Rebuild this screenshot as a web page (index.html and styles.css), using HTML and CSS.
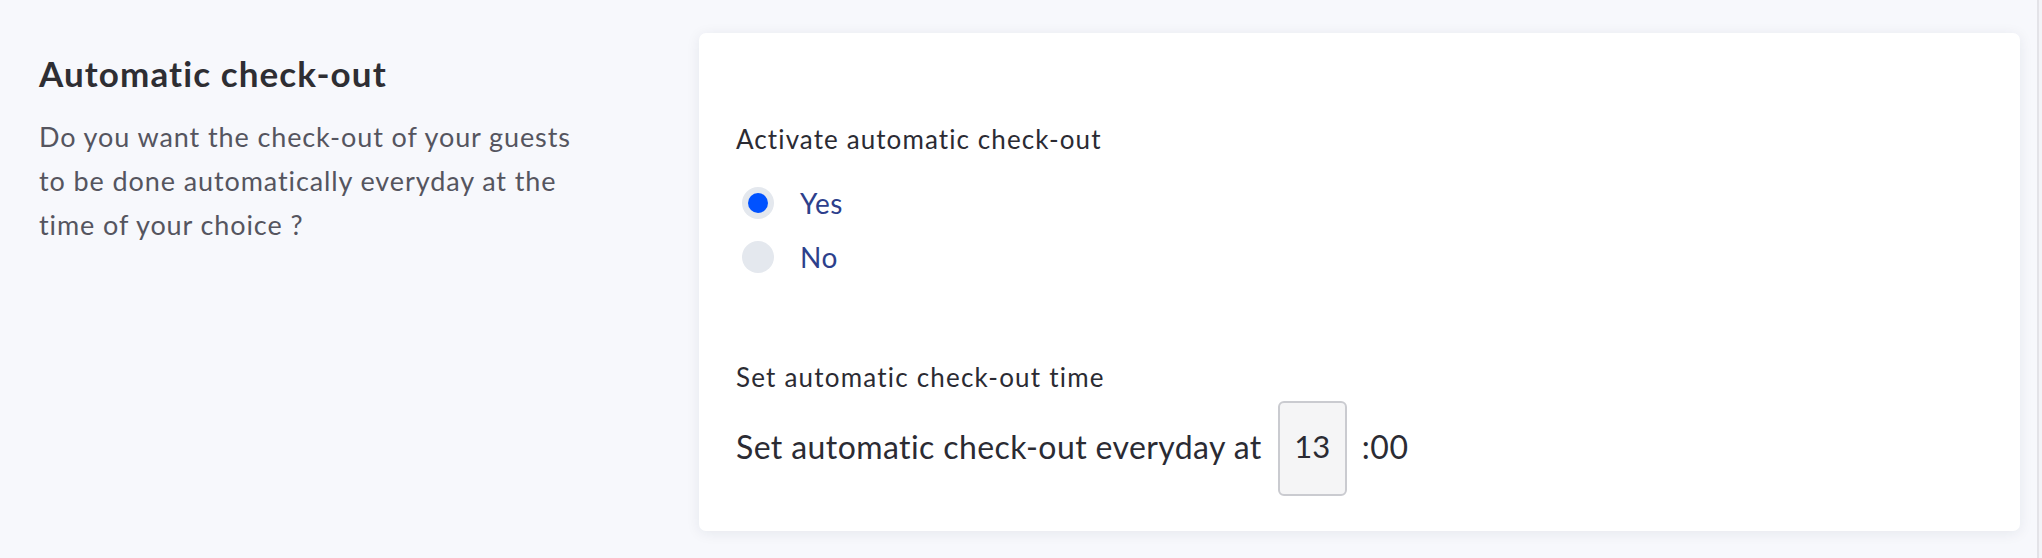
FILE: index.html
```html
<!DOCTYPE html>
<html lang="en">
<head>
<meta charset="utf-8">
<title>Automatic check-out</title>
<link rel="stylesheet" href="styles.css">
</head>
<body>
<div class="page">
  <section class="setting">
    <div class="intro">
      <h2 class="intro-title">Automatic check-out</h2>
      <p class="intro-text">Do you want the check-out of your guests to be done automatically everyday at the time of your choice ?</p>
    </div>
    <div class="card">
      <div class="field">
        <div class="field-label">Activate automatic check-out</div>
        <div class="radios">
          <label class="radio">
            <span class="radio-dot checked"></span>
            <span class="radio-text">Yes</span>
          </label>
          <label class="radio">
            <span class="radio-dot"></span>
            <span class="radio-text">No</span>
          </label>
        </div>
      </div>
      <div class="field time-field">
        <div class="field-label small">Set automatic check-out time</div>
        <div class="time-row">
          <span class="time-text">Set automatic check-out everyday at</span>
          <span class="time-box">13</span>
          <span class="time-suffix">:00</span>
        </div>
      </div>
    </div>
  </section>
  <div class="scroll-edge"></div>
</div>
</body>
</html>
```

FILE: styles.css
```css
html, body {
  margin: 0;
  padding: 0;
}

body {
  background: #f7f8fc;
  font-family: Lato, "Open Sans", sans-serif;
  color: #2b2b33;
  width: 2042px;
  height: 558px;
  overflow: hidden;
}

.page {
  display: flex;
  height: 558px;
}

.setting {
  flex: 1;
  display: flex;
  padding: 33px 0 0 39px;
}

.intro {
  width: 580px;
  flex: none;
  padding-top: 20px;
}

.intro-title {
  margin: 0;
  font-size: 35px;
  font-weight: 700;
  letter-spacing: 1.1px;
  color: #2e2e33;
  line-height: 40px;
}

.intro-text {
  margin: 22px 0 0 0;
  font-size: 27px;
  letter-spacing: 0.9px;
  line-height: 44px;
  color: #55555f;
  width: 545px;
}

.card {
  margin-left: 80px;
  width: 1321px;
  height: 498px;
  box-sizing: border-box;
  background: #fff;
  border-radius: 7px;
  box-shadow: 0 2px 14px rgba(30, 35, 70, 0.08);
  padding: 90px 37px 0 37px;
}

.field-label {
  font-size: 26px;
  line-height: 32px;
  color: #2b2b33;
  letter-spacing: 1.1px;
}

.radios {
  display: flex;
  flex-direction: column;
  gap: 22px;
  margin-top: 32px;
  padding-left: 6px;
}

.radio {
  display: flex;
  align-items: center;
  gap: 26px;
}

.radio-dot {
  width: 32px;
  height: 32px;
  border-radius: 50%;
  background: #e4e8ee;
  display: flex;
  align-items: center;
  justify-content: center;
}

.radio-dot.checked::after {
  content: "";
  width: 20px;
  height: 20px;
  border-radius: 50%;
  background: #0052ff;
}

.radio-text {
  font-size: 28px;
  color: #2d3f8c;
  line-height: 32px;
  letter-spacing: 0.5px;
}

.time-field {
  margin-top: 88px;
}

.field-label.small {
  letter-spacing: 1.2px;
}

.time-row {
  display: flex;
  align-items: center;
  margin-top: 8px;
}

.time-text {
  font-size: 32px;
  line-height: 1;
  letter-spacing: 0.4px;
  color: #2b2b33;
  padding-bottom: 4px;
}

.time-box {
  width: 69px;
  height: 95px;
  box-sizing: border-box;
  margin-left: 16px;
  padding-bottom: 6px;
  border: 2px solid #cacbd0;
  border-radius: 6px;
  background: #f5f5f6;
  display: flex;
  align-items: center;
  justify-content: center;
  font-size: 31px;
  color: #2b2b33;
}

.time-suffix {
  margin-left: 15px;
  font-size: 32px;
  line-height: 1;
  letter-spacing: 0.6px;
  color: #2b2b33;
  padding-bottom: 4px;
}

.scroll-edge {
  width: 4px;
  margin-left: 17px;
  border-left: 2px solid #e3e3e8;
  background: #f3f3f7;
}
```
